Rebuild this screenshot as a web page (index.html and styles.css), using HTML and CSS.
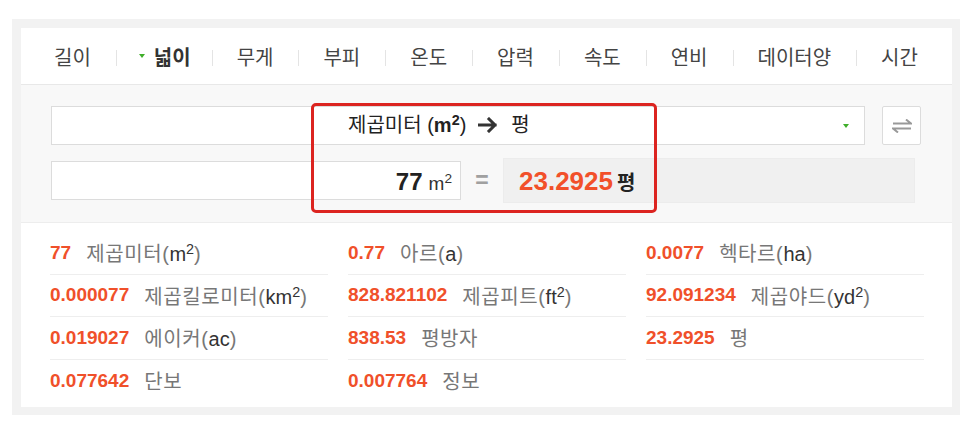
FILE: index.html
```html
<!DOCTYPE html>
<html lang="ko">
<head>
<meta charset="utf-8">
<title>넓이 단위 변환</title>
<link rel="stylesheet" href="styles.css">
</head>
<body>
<div class="wrap">
  <div class="card">
    <nav class="tabs">
      <span class="tab">길이</span>
      <span class="tab active"><i class="tri"></i>넓이</span>
      <span class="tab">무게</span>
      <span class="tab">부피</span>
      <span class="tab">온도</span>
      <span class="tab">압력</span>
      <span class="tab">속도</span>
      <span class="tab">연비</span>
      <span class="tab">데이터양</span>
      <span class="tab">시간</span>
    </nav>
    <section class="conv">
      <div class="row1">
        <div class="select">
          <span class="sel-text">제곱미터 (<b>m<span class="sup">2</span></b>)<svg class="arrow" width="20" height="16" viewBox="0 0 20 16"><path d="M1 8 H17 M11 2 L17 8 L11 14" fill="none" stroke="#333" stroke-width="3" stroke-linecap="square"/></svg>평</span>
          <i class="tri sel-tri"></i>
        </div>
        <div class="swap">
          <svg width="20" height="14" viewBox="0 0 20 14"><path d="M1 4.5 H19 L14 0.5 M19 9.5 H1 L6 13.5" fill="none" stroke="#999" stroke-width="2"/></svg>
        </div>
      </div>
      <div class="row2">
        <div class="input"><b class="in-num">77</b><span class="in-unit">m<span class="sup">2</span></span></div>
        <div class="eq">=</div>
        <div class="result"><b class="res-num">23.2925</b><b class="res-unit">평</b></div>
      </div>
    </section>
    <section class="list">
      <div class="item"><b>77</b><span class="lbl">제곱미터(<span class="u">m<span class="sup">2</span></span>)</span></div>
      <div class="item"><b>0.77</b><span class="lbl">아르(<span class="u">a</span>)</span></div>
      <div class="item"><b>0.0077</b><span class="lbl">헥타르(<span class="u">ha</span>)</span></div>
      <div class="item"><b>0.000077</b><span class="lbl">제곱킬로미터(<span class="u">km<span class="sup">2</span></span>)</span></div>
      <div class="item"><b>828.821102</b><span class="lbl">제곱피트(<span class="u">ft<span class="sup">2</span></span>)</span></div>
      <div class="item"><b>92.091234</b><span class="lbl">제곱야드(<span class="u">yd<span class="sup">2</span></span>)</span></div>
      <div class="item"><b>0.019027</b><span class="lbl">에이커(<span class="u">ac</span>)</span></div>
      <div class="item"><b>838.53</b><span class="lbl">평방자</span></div>
      <div class="item"><b>23.2925</b><span class="lbl">평</span></div>
      <div class="item last"><b>0.077642</b><span class="lbl">단보</span></div>
      <div class="item last"><b>0.007764</b><span class="lbl">정보</span></div>
    </section>
  </div>
  <div class="highlight"></div>
</div>
</body>
</html>
```

FILE: styles.css
```css
* { box-sizing: border-box; }
body {
  margin: 0;
  background: #fff;
  font-family: "Liberation Sans", "Noto Sans CJK KR", sans-serif;
  color: #333;
}
.wrap {
  position: relative;
  margin: 19px 0 0 12px;
  width: 948px;
  background: #f2f2f2;
  padding: 9px 8px 8px 9px;
}
.card { background: #fff; }

/* tabs */
.tabs {
  display: flex;
  align-items: center;
  height: 57px;
  padding: 4px 0 0 8px;
  border-bottom: 1px solid #e8e8e8;
}
.tab {
  position: relative;
  display: flex;
  align-items: center;
  padding: 0 25px;
  font-size: 20px;
  line-height: 24px;
  color: #444;
}
.tab + .tab::before {
  content: "";
  position: absolute;
  left: 0;
  top: 4px;
  width: 1px;
  height: 16px;
  background: #e4e4e4;
}
.tab.active {
  font-weight: bold;
  color: #333;
  padding-left: 23px;
  padding-right: 21px;
}
.tri {
  display: inline-block;
  width: 0;
  height: 0;
  border-left: 3.5px solid transparent;
  border-right: 3.5px solid transparent;
  border-top: 4px solid #3fae2a;
  margin-right: 9px;
  margin-top: -4px;
}

/* converter */
.conv {
  background: #f8f8f8;
  padding: 21px 31px 19px 30px;
  border-bottom: 1px solid #ededed;
}
.row1 {
  display: flex;
  align-items: flex-start;
  gap: 17px;
}
.select {
  position: relative;
  width: 814px;
  height: 39px;
  background: #fff;
  border: 1px solid #dcdcdc;
  padding: 6px 0 0 296px;
}
.sel-text {
  display: inline-block;
  font-size: 20px;
  line-height: 24px;
  color: #222;
  white-space: nowrap;
}
.sel-text b { font-weight: bold; }
.arrow {
  display: inline-block;
  vertical-align: -1px;
  margin: 0 13px 0 12px;
}
.sel-tri {
  position: absolute;
  right: 15px;
  top: 17px;
  margin: 0;
}
.swap {
  width: 39px;
  height: 39px;
  background: #fff;
  border: 1px solid #dcdcdc;
  border-radius: 2px;
  display: flex;
  align-items: center;
  justify-content: center;
}
.row2 {
  display: flex;
  align-items: center;
  margin-top: 13px;
  height: 45px;
}
.input {
  width: 410px;
  height: 39px;
  background: #fff;
  border: 1px solid #dcdcdc;
  display: flex;
  align-items: baseline;
  justify-content: flex-end;
  padding: 6px 8px 0 0;
}
.in-num {
  font-size: 24px;
  line-height: 28px;
  color: #222;
}
.in-unit {
  font-size: 19px;
  margin-left: 6px;
  color: #333;
}
.sup {
  font-size: 0.72em;
  position: relative;
  top: -0.5em;
  line-height: 0;
}
.eq {
  width: 42px;
  text-align: center;
  font-size: 23px;
  font-weight: bold;
  color: #a0a0a0;
}
.result {
  width: 412px;
  height: 45px;
  background: #f0f0f0;
  border: 1px solid #ececec;
  display: flex;
  align-items: baseline;
  padding: 7px 0 0 15px;
}
.res-num {
  font-size: 26px;
  line-height: 30px;
  color: #f2502a;
}
.res-unit {
  font-size: 20px;
  margin-left: 4px;
  color: #222;
}

/* results */
.list {
  display: grid;
  grid-template-columns: repeat(3, 278px);
  column-gap: 20px;
  padding: 9px 0 5px 29px;
}
.item {
  display: flex;
  align-items: center;
  height: 42.5px;
  border-bottom: 1px solid #eeeeee;
  font-size: 19px;
}
.item.last { border-bottom: none; }
.item b {
  color: #f0502a;
  font-weight: bold;
  margin-right: 15px;
}
.lbl {
  color: #777;
  font-size: 20px;
  letter-spacing: 0.6px;
}
.u { color: #333; letter-spacing: 0; }

/* annotation overlay */
.highlight {
  position: absolute;
  left: 299px;
  top: 84px;
  width: 346px;
  height: 110px;
  border: 3px solid #dc2420;
  border-radius: 5px;
  pointer-events: none;
}
```
